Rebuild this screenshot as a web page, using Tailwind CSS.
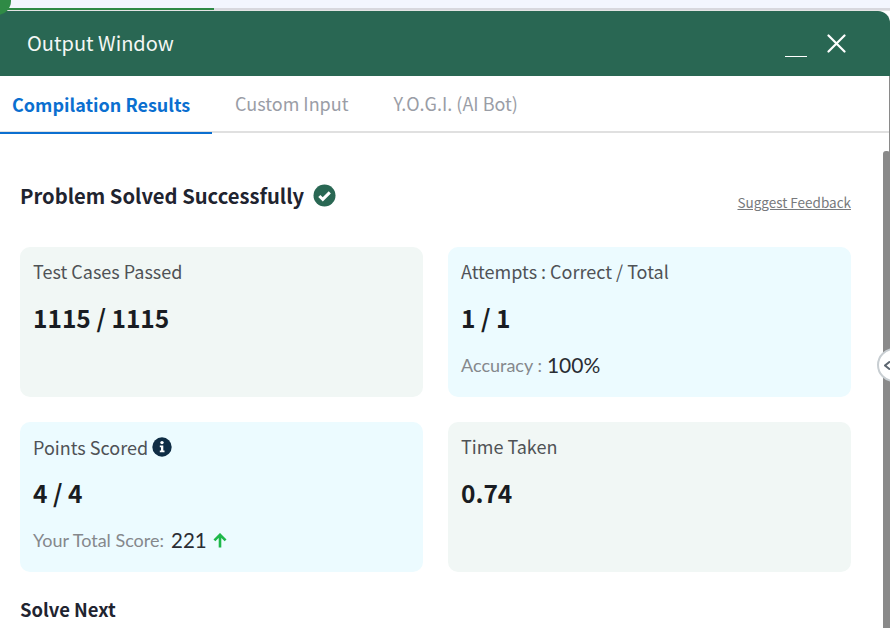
<!DOCTYPE html>
<html>
  <head>
    <meta charset="utf-8" />
    <title>Output Window</title>
    <script src="https://cdn.jsdelivr.net/npm/@tailwindcss/browser@4"></script>
  </head>
  <body class="bg-white">
    <div class="relative w-[890px] h-[628px] overflow-hidden bg-white font-['Noto_Sans_CJK_SC','Noto_Sans',sans-serif]">
      <!-- strip above the window -->
      <div class="h-2 bg-[#f3f6fe]"></div>
      <div class="flex h-[2px] bg-[#d8d8de]">
        <div class="w-[214px] bg-[#2f8a45]"></div>
      </div>
      <div class="h-px bg-[#e4e4e4]"></div>

      <!-- header -->
      <div class="flex h-[65px] items-center justify-between rounded-tr-[12px] bg-[#296753] pl-[27px] pr-[44px]">
        <div class="text-[20px] leading-none text-[#f4f7f5] -mt-[2px]">Output Window</div>
        <div class="flex items-center gap-[20px]">
          <div class="mt-[25px] h-[1px] w-[22px] bg-white"></div>
          <svg class="w-[19px] h-[19px] -mt-[1px]" viewBox="0 0 19 19" fill="none" stroke="white" stroke-width="2.2" stroke-linecap="round"><path d="M1.5 1.5 17.5 17.5M17.5 1.5 1.5 17.5" /></svg>
        </div>
      </div>

      <!-- tabs -->
      <div class="flex h-[57px] border-b-2 border-[#e0e0e0] text-[18px]">
        <div class="-mb-[2px] flex h-[58px] w-[212px] items-center border-b-2 border-[#0b6fd0] pl-[12px] font-bold text-[#0b6fd0]">Compilation Results</div>
        <div class="flex items-center pl-[23px] text-[#9a9da6]">Custom Input</div>
        <div class="flex items-center pl-[45px] text-[#9a9da6]">Y.O.G.I. (AI Bot)</div>
      </div>

      <!-- results -->
      <div class="pl-[20px] pr-[39px]">
        <div class="flex h-[114px] items-start justify-between pt-[49px]">
          <div class="flex items-center gap-[9px]">
            <div class="text-[20.2px] font-bold leading-[28px] text-[#1f2430]">Problem Solved Successfully</div>
            <svg class="w-[23px] h-[23px] -mt-[2px]" viewBox="0 0 23 23"><circle cx="11.5" cy="11.5" r="11" fill="#296753" /><path d="M6.3 12 9.8 15.4 16.8 8.4" fill="none" stroke="white" stroke-width="3" /></svg>
          </div>
          <div class="mt-[10px] text-[13.5px] leading-[20px] text-[#77797c] underline">Suggest Feedback</div>
        </div>

        <div class="grid grid-cols-[403px_403px] gap-x-[25px] gap-y-[25px]">
          <div class="h-[150px] rounded-[10px] bg-[#f1f7f5] pl-[13px] pt-[11px]">
            <div class="text-[18px] leading-[26px] text-[#4f5256]">Test Cases Passed</div>
            <div class="mt-[19px] text-[24.5px] font-bold leading-[30px] text-[#191c22]">1115 / 1115</div>
          </div>
          <div class="h-[150px] rounded-[10px] bg-[#ecfbff] pl-[13px] pt-[11px]">
            <div class="text-[18px] leading-[26px] text-[#4f5256]">Attempts : Correct / Total</div>
            <div class="mt-[19px] text-[24.5px] font-bold leading-[30px] text-[#191c22]">1 / 1</div>
            <div class="mt-[18px] flex items-center gap-[5px] leading-[28px]">
              <span class="font-['Lato',sans-serif] text-[18px] text-[#85888c]">Accuracy :</span>
              <span class="font-['Lato',sans-serif] text-[21px] text-[#2a2d33]">100%</span>
            </div>
          </div>
          <div class="h-[150px] rounded-[10px] bg-[#ecfbff] pl-[13px] pt-[12px]">
            <div class="flex items-center gap-[4px]">
              <span class="text-[18px] leading-[26px] text-[#4f5256]">Points Scored</span>
              <svg class="w-5 h-5 -mt-[1px]" viewBox="0 0 20 20"><circle cx="10" cy="10" r="9.7" fill="#0f2d45" /><circle cx="10" cy="5.6" r="1.7" fill="white" /><path d="M7.8 8.6H11.3V13.6H12.5V15.2H7.8V13.6H9V10.2H7.8Z" fill="white" /></svg>
            </div>
            <div class="mt-[18px] text-[24.5px] font-bold leading-[30px] text-[#191c22]">4 / 4</div>
            <div class="mt-[18px] flex items-center gap-[7px] leading-[28px]">
              <span class="font-['Lato',sans-serif] text-[18px] text-[#85888c]">Your Total Score:</span>
              <span class="font-['Lato',sans-serif] text-[20.5px] text-[#2a2d33]">221</span>
              <svg class="w-[14px] h-[15px] -ml-[1px]" viewBox="0 0 14 15" fill="none" stroke="#1eb84a" stroke-width="2.6"><path d="M7 14.5V2M1.4 7.4 7 1.8 12.6 7.4" /></svg>
            </div>
          </div>
          <div class="h-[150px] rounded-[10px] bg-[#f1f7f5] pl-[13px] pt-[11px]">
            <div class="text-[18px] leading-[26px] text-[#4f5256]">Time Taken</div>
            <div class="mt-[19px] text-[24.5px] font-bold leading-[30px] text-[#191c22]">0.74</div>
          </div>
        </div>

        <div class="mt-[25px] text-[18.4px] font-bold leading-[24px] text-[#1f2430]">Solve Next</div>
      </div>

      <!-- things lying over the window -->
      <div class="absolute left-[-17px] top-[-13px] h-[28px] w-[28px] rounded-full bg-[#2f8a45]"></div>
      <div class="absolute right-0 top-[76px] h-[552px] w-px bg-[#8a8a8a]"></div>
      <div class="absolute right-0 top-[151px] h-[477px] w-[7px] rounded-t-[3px] bg-[#8a8a8a]"></div>
      <div class="absolute left-[877px] top-[348px] flex h-[34px] w-[34px] items-center rounded-full border-2 border-[#c8ced2] bg-white pl-[5px]">
        <svg class="w-[7px] h-[9px]" viewBox="0 0 7 9"><path d="M6 .5 1 4.5 6 8.5" fill="none" stroke="#5c6670" stroke-width="2" /></svg>
      </div>
    </div>
  </body>
</html>
